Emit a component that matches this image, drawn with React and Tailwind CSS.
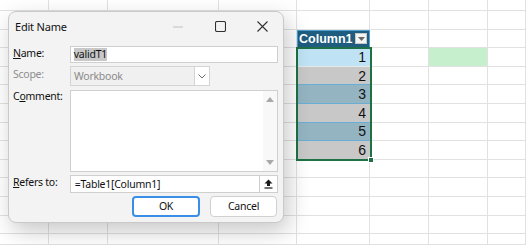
import React from "react";

const COLS = 8;
const ROWS = 14;

function cellClass(r, c) {
  if (c === 4 && r === 2) return "header";
  if (c === 4 && r >= 3 && r <= 8) return "data";
  if (c === 6 && r === 3) return "green";
  return "plain";
}

const dataStyles = {
  3: "bg-[#bfe3f4] border-b border-[#e8e8e8]",
  4: "bg-[#c8c8c8] border-b border-[#6aaed6]",
  5: "bg-[#94b4c2] border-b border-[#6aaed6]",
  6: "bg-[#c8c8c8] border-b border-[#6aaed6]",
  7: "bg-[#94b4c2] border-b border-[#6aaed6]",
  8: "bg-[#c8c8c8] border-b border-[#e8e8e8]",
};

function Cell({ r, c }) {
  const kind = cellClass(r, c);
  if (kind === "header") {
    return (
      <div className="bg-[#1e5d80] border border-[#4e9fd2] flex items-center justify-between pl-[1px] pr-[2px]">
        <span className="text-white font-bold text-[12.5px] leading-none" style={{ fontFamily: '"Liberation Sans", Arial, sans-serif' }}>
          Column1
        </span>
        <span className="w-[12px] h-[11px] bg-[#f4f4f4] border border-[#c8c8c8] flex items-center justify-center">
          <svg width="7" height="4" viewBox="0 0 7 4"><path d="M0 0 H7 L3.5 4 Z" fill="#666" /></svg>
        </span>
      </div>
    );
  }
  if (kind === "data") {
    return (
      <div className={`${dataStyles[r]} flex items-center justify-end pr-[4px]`}>
        <span className="text-[14px] leading-none text-[#111]" style={{ fontFamily: '"Liberation Sans", Arial, sans-serif' }}>
          {r - 2}
        </span>
      </div>
    );
  }
  if (kind === "green") {
    return <div className="bg-[#c6efce] border-r border-b border-[#e1e1e1]" />;
  }
  return <div className="border-r border-b border-[#e1e1e1]" />;
}

export default function App() {
  const cells = [];
  for (let r = 0; r < ROWS; r++) {
    for (let c = 0; c < COLS; c++) {
      cells.push(<Cell key={`${r}-${c}`} r={r} c={c} />);
    }
  }
  return (
    <div
      className="relative w-[526px] h-[245px] overflow-hidden bg-white"
      style={{ fontFamily: '"Noto Sans", "Open Sans", sans-serif' }}
    >
      <div className="relative grid w-full h-full grid-cols-[49px_59px_111px_78px_73px_59px_59px_1fr] grid-rows-[11px_repeat(12,18.6px)_1fr]">
        {cells}
        {/* selection outline */}
        <div className="absolute left-[296px] top-[47px] w-[76px] h-[114px] border-2 border-[#1e7145] pointer-events-none" />
        <div className="absolute left-[368px] top-[157px] w-[6px] h-[6px] bg-[#1e7145] border border-white" />
      </div>

      {/* Dialog */}
      <div className="absolute left-[8px] top-[11px] w-[276px] h-[212px] bg-[#f3f3f3] border border-[#c9c9c9] rounded-[8px] shadow-[4px_8px_22px_rgba(0,0,0,0.22)] flex flex-col text-[10.5px] tracking-[-0.25px] leading-[13px] text-[#111]">
        {/* Title bar */}
        <div className="h-[29px] flex items-center justify-between">
          <span className="pl-[6px] text-[11px] tracking-[-0.2px]">Edit Name</span>
          <div className="flex h-full">
            <div className="w-[42px] flex items-center justify-center">
              <svg width="10" height="2" viewBox="0 0 10 2"><path d="M0 1 H10" stroke="#c0c0c0" strokeWidth="1" /></svg>
            </div>
            <div className="w-[42px] flex items-center justify-center">
              <svg width="11" height="11" viewBox="0 0 11 11"><rect x="0.5" y="0.5" width="10" height="10" rx="1.5" fill="none" stroke="#303030" strokeWidth="1.1" /></svg>
            </div>
            <div className="w-[42px] flex items-center justify-center">
              <svg width="11" height="11" viewBox="0 0 11 11"><path d="M0.5 0.5 L10.5 10.5 M10.5 0.5 L0.5 10.5" stroke="#303030" strokeWidth="1.1" /></svg>
            </div>
          </div>
        </div>

        {/* Body */}
        <div className="flex flex-col pt-[5px] pr-[5px] gap-[3px]">
          {/* Name */}
          <div className="flex items-center">
            <div className="w-[61px] pl-[4px] -mt-[3px]">
              <span className="underline">N</span>ame:
            </div>
            <div className="w-[209px] h-[17px] bg-white border border-[#cfcfcf] flex items-center pl-[3px]">
              <span className="bg-[#c8c8c8]">validT1</span>
            </div>
          </div>
          {/* Scope */}
          <div className="flex items-center">
            <div className="w-[61px] pl-[4px] -mt-[3px] text-[#8d8d8d]">Scope:</div>
            <div className="w-[140px] h-[20px] bg-[#f0f0f0] border border-[#d4d4d4] flex items-center justify-between">
              <span className="pl-[3px] text-[#8a8a8a]">Workbook</span>
              <span className="w-[15px] h-full bg-white border-l border-[#d4d4d4] flex items-center justify-center">
                <svg width="8" height="5" viewBox="0 0 8 5"><path d="M0.5 0.5 L4 4 L7.5 0.5" fill="none" stroke="#707070" strokeWidth="1" /></svg>
              </span>
            </div>
          </div>
          {/* Comment */}
          <div className="flex items-start mt-[1px]">
            <div className="w-[61px] pl-[4px]">
              C<span className="underline">o</span>mment:
            </div>
            <div className="w-[209px] h-[82px] bg-white border border-[#cfcfcf] flex justify-end">
              <div className="w-[14px] h-full bg-[#f8f8f8] flex flex-col items-center justify-between pt-[6px] pb-[6px]">
                <svg width="8" height="5" viewBox="0 0 8 5"><path d="M0 5 L4 0 L8 5 Z" fill="#a8a8a8" /></svg>
                <svg width="8" height="5" viewBox="0 0 8 5"><path d="M0 0 L4 5 L8 0 Z" fill="#a8a8a8" /></svg>
              </div>
            </div>
          </div>
          {/* Refers to */}
          <div className="flex items-center">
            <div className="w-[61px] pl-[4px] -mt-[3px]">
              <span className="underline">R</span>efers to:
            </div>
            <div className="w-[209px] h-[18px] bg-white border border-[#cfcfcf] flex items-center justify-between">
              <span className="pl-[4px]">=Table1[Column1]</span>
              <span className="w-[18px] h-full border-l border-[#cfcfcf] flex items-center justify-center">
                <svg width="9" height="10" viewBox="0 0 9 10">
                  <path d="M4.5 0.5 L8.5 4.5 H6 V7 H3 V4.5 H0.5 Z" fill="#1a1a1a" />
                  <path d="M0.5 9 H8.5" stroke="#1a1a1a" strokeWidth="1.2" />
                </svg>
              </span>
            </div>
          </div>
          {/* Buttons */}
          <div className="flex justify-end gap-[10px] pr-[1px]">
            <button className="w-[68px] h-[21px] bg-white border-2 border-[#3a8ee6] rounded-[4px] flex items-center justify-center">
              OK
            </button>
            <button className="w-[67px] h-[21px] bg-white border border-[#d0d0d0] rounded-[4px] flex items-center justify-center">
              Cancel
            </button>
          </div>
        </div>
      </div>
    </div>
  );
}
